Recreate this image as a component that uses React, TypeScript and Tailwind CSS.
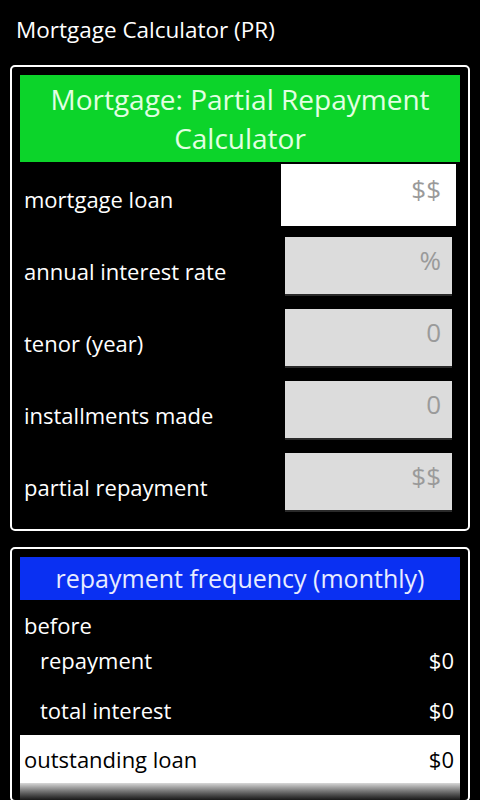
const font = { fontFamily: '"Open Sans", "Noto Sans", sans-serif' };

interface FieldRowProps {
  label: string;
  hint: string;
  focused?: boolean;
}

function FieldRow({ label, hint, focused }: FieldRowProps) {
  return (
    <div className="flex h-[72px] items-start justify-between">
      <div className="mt-[22px] pl-[4px] text-[22px] leading-[30px] text-white">{label}</div>
      <div className="mr-[4px] mt-[2px] h-[62px] w-[175px] shrink-0">
        {focused ? (
          <div className="h-full w-full bg-white pr-[15px] pt-[10px] text-right text-[26px] leading-[30px] text-[#9a9a9a]">
            {hint}
          </div>
        ) : (
          <div className="ml-[4px] mt-[1px] h-[59px] w-[167px] border-b-2 border-[#2a2a2a] bg-[#dcdcdc] pr-[11px] pt-[8px] text-right text-[26px] leading-[30px] text-[#9a9a9a]">
            {hint}
          </div>
        )}
      </div>
    </div>
  );
}

function ResultRow({ label, value }: { label: string; value: string }) {
  return (
    <div className="flex h-[50px] items-center justify-between pl-[20px] pr-[6px] text-[22px] text-white">
      <span>{label}</span>
      <span>{value}</span>
    </div>
  );
}

export default function App() {
  return (
    <div className="h-[800px] w-[480px] overflow-hidden bg-black" style={font}>
      <div className="h-[65px] pl-[16px] pt-[15px] text-[22.5px] leading-[30px] text-white">
        Mortgage Calculator (PR)
      </div>

      <div className="mx-[10px] rounded-[5px] border-2 border-white px-[8px] pb-[7px] pt-[8px]">
        <div className="flex h-[87px] items-center justify-center bg-[#0cd42a] text-center text-[28px] leading-[39px] text-[#e2ffe2]">
          Mortgage: Partial Repayment
          <br />
          Calculator
        </div>
        <FieldRow label="mortgage loan" hint="$$" focused />
        <FieldRow label="annual interest rate" hint="%" />
        <FieldRow label="tenor (year)" hint="0" />
        <FieldRow label="installments made" hint="0" />
        <FieldRow label="partial repayment" hint="$$" />
      </div>

      <div className="mx-[10px] mt-[16px] rounded-[5px] border-2 border-white px-[8px] pt-[8px]">
        <div className="flex h-[43px] items-center justify-center bg-[#0a30f2] text-[25px] text-[#e8ecff]">
          repayment frequency (monthly)
        </div>
        <div className="flex h-[35px] items-end pl-[4px] text-[22px] leading-[20px] text-white">before</div>
        <ResultRow label="repayment" value="$0" />
        <ResultRow label="total interest" value="$0" />
        <div className="flex h-[48px] items-center justify-between bg-white pl-[4px] pr-[6px] text-[22px] text-black">
          <span>outstanding loan</span>
          <span>$0</span>
        </div>
        <div className="h-[17px] bg-gradient-to-b from-[#d8d8d8] to-[#1a1a1a]" />
      </div>
    </div>
  );
}
